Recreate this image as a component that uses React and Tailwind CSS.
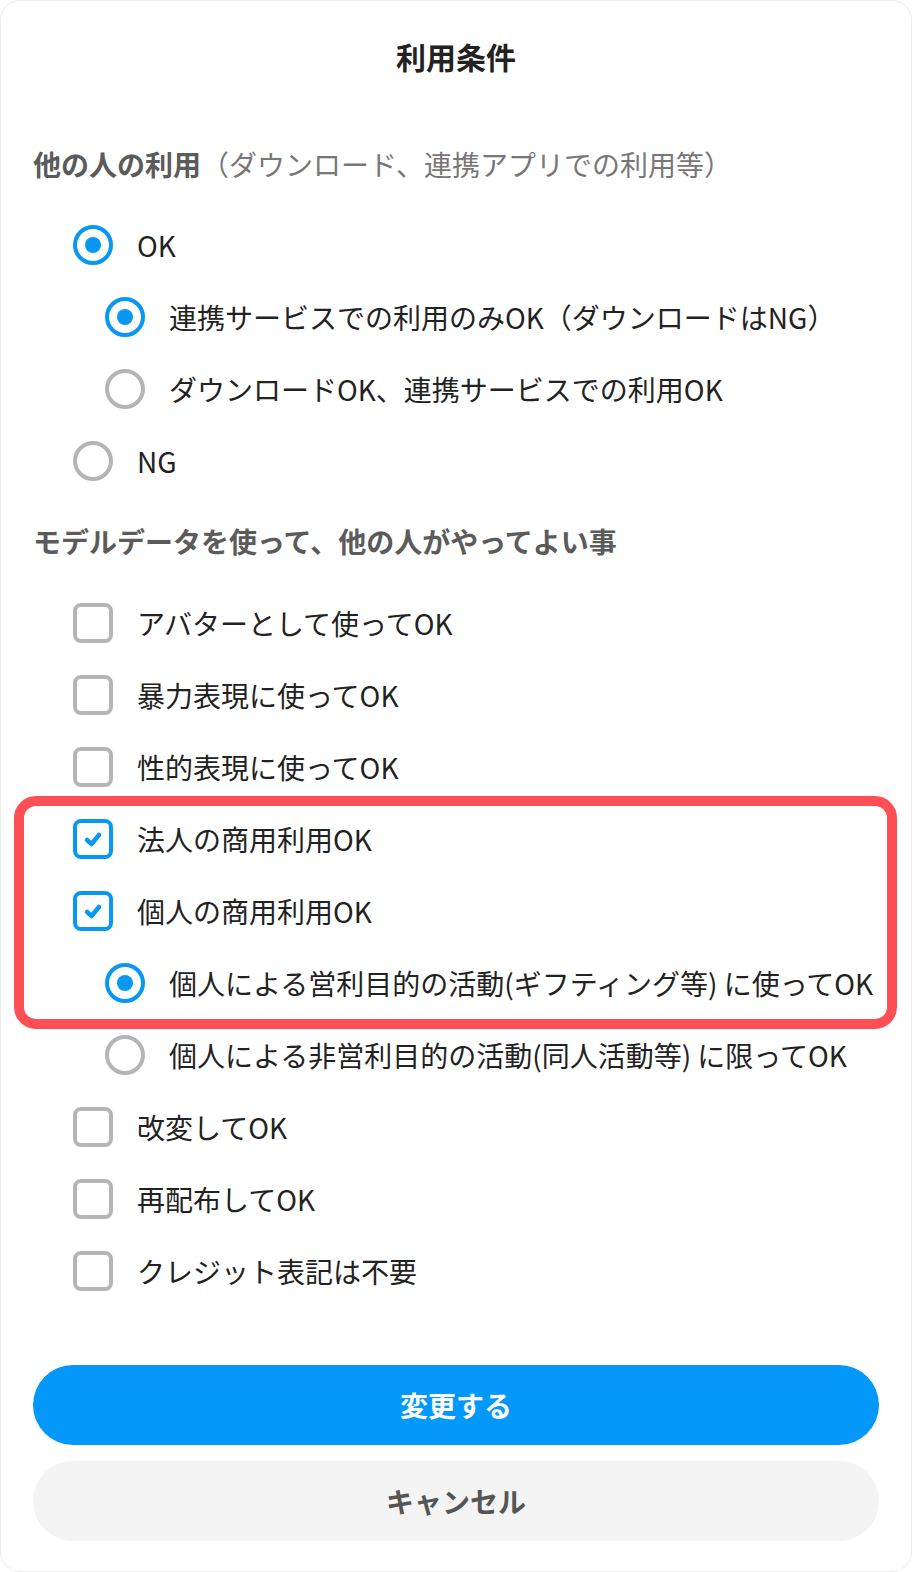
import React from "react";

const FONT = { fontFamily: '"Noto Sans CJK JP", "Noto Sans", sans-serif' };

function Radio({ checked }) {
  return (
    <div
      className={`w-10 h-10 shrink-0 rounded-full border-4 flex items-center justify-center ${
        checked ? "border-[#0898f4]" : "border-[#b5b5b5]"
      }`}
    >
      {checked && <div className="w-4 h-4 rounded-full bg-[#0898f4]" />}
    </div>
  );
}

function Checkbox({ checked }) {
  return (
    <div
      className={`w-10 h-10 shrink-0 rounded-lg border-4 flex items-center justify-center ${
        checked ? "border-[#0898f4]" : "border-[#b5b5b5]"
      }`}
    >
      {checked && (
        <svg width="22" height="22" viewBox="0 0 22 22">
          <polyline
            points="5,12 9.5,16 17,7"
            fill="none"
            stroke="#0898f4"
            strokeWidth="4.5"
            strokeLinecap="round"
            strokeLinejoin="round"
          />
        </svg>
      )}
    </div>
  );
}

function Row({ indent, control, children }) {
  return (
    <div className={`h-[72px] flex items-center gap-6 ${indent ? "pl-[72px]" : "pl-10"}`}>
      {control}
      <span className="text-[28px] leading-none text-[#222] whitespace-nowrap">{children}</span>
    </div>
  );
}

export default function App() {
  return (
    <div style={FONT} className="w-[912px] h-[1572px] bg-white rounded-[20px] border border-[#ececec] overflow-hidden">
      <div className="px-8">
        <div className="h-[110px] flex items-center justify-center">
          <h1 className="text-[30px] font-bold text-[#222] leading-none">利用条件</h1>
        </div>

        <div className="mt-[17px] h-[72px] flex items-center text-[28px] leading-none whitespace-nowrap">
          <span className="font-bold text-[#5b5b5b]">他の人の利用</span>
          <span className="text-[#777]">（ダウンロード、連携アプリでの利用等）</span>
        </div>

        <div className="mt-[9px]">
          <Row control={<Radio checked />}>OK</Row>
          <Row indent control={<Radio checked />}>連携サービスでの利用のみOK（ダウンロードはNG）</Row>
          <Row indent control={<Radio />}>ダウンロードOK、連携サービスでの利用OK</Row>
          <Row control={<Radio />}>NG</Row>
        </div>

        <div className="mt-[8px] h-[72px] flex items-center text-[28px] leading-none font-bold text-[#5b5b5b] whitespace-nowrap">
          モデルデータを使って、他の人がやってよい事
        </div>

        <div className="mt-[10px]">
          <Row control={<Checkbox />}>アバターとして使ってOK</Row>
          <Row control={<Checkbox />}>暴力表現に使ってOK</Row>
          <Row control={<Checkbox />}>性的表現に使ってOK</Row>
          <div className="relative">
            <Row control={<Checkbox checked />}>法人の商用利用OK</Row>
            <Row control={<Checkbox checked />}>個人の商用利用OK</Row>
            <Row indent control={<Radio checked />}>個人による営利目的の活動(ギフティング等) に使ってOK</Row>
            <div className="absolute top-[-7px] bottom-[-10px] left-[-19px] right-[-18px] border-[10px] border-[#fd4f55] rounded-[22px] pointer-events-none" />
          </div>
          <Row indent control={<Radio />}>個人による非営利目的の活動(同人活動等) に限ってOK</Row>
          <Row control={<Checkbox />}>改変してOK</Row>
          <Row control={<Checkbox />}>再配布してOK</Row>
          <Row control={<Checkbox />}>クレジット表記は不要</Row>
        </div>

        <div className="mt-[58px] flex flex-col gap-4">
          <button className="h-20 w-full rounded-full bg-[#0398fa] text-white text-[28px] font-bold leading-none">
            変更する
          </button>
          <button className="h-20 w-full rounded-full bg-[#f4f4f4] text-[#555] text-[28px] font-bold leading-none">
            キャンセル
          </button>
        </div>
      </div>
    </div>
  );
}
